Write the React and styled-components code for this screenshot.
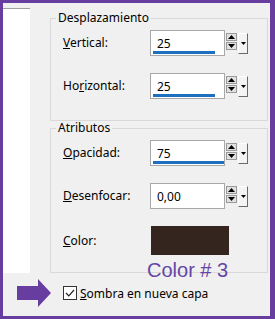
import React from "react";
import styled, { createGlobalStyle } from "styled-components";

const Global = createGlobalStyle`
  body {
    margin: 0;
    font-family: "Noto Sans", "Open Sans", sans-serif;
    font-size: 12px;
    color: #000;
  }
`;

const Frame = styled.div`
  position: relative;
  width: 275px;
  height: 319px;
  box-sizing: border-box;
  border: 3px solid #673ea0;
  border-right-width: 5px;
  background: #f0f0f0;
  display: flex;
  flex-direction: column;
`;

const Top = styled.div`
  display: flex;
  height: 270px;
`;

const Strip = styled.div`
  width: 27px;
  display: flex;
  flex-direction: column;
  .cap {
    height: 5px;
    background: #f0f0f0;
  }
  .body {
    flex: 1;
    background: #fff;
    border-top: 1px solid #a0a0a0;
  }
`;

const Panel = styled.div`
  flex: 1;
  padding: 8px 2px 0 20px;
  display: flex;
  flex-direction: column;
`;

const Group = styled.fieldset`
  margin: 0;
  padding: 5px 0 ${(p) => p.$bottom}px 12px;
  border: 1px solid #d9d9d9;
  border-radius: 0;
  min-width: 0;
  display: flex;
  flex-direction: column;
  gap: 17px;
  legend {
    margin-left: -7px;
    padding: 0 2px;
    line-height: 14px;
    height: 14px;
  }
`;

const Row = styled.div`
  display: flex;
  align-items: center;
  height: ${(p) => p.$h || 26}px;
`;

const Label = styled.div`
  width: 87px;
  line-height: 14px;
`;

const Field = styled.div`
  position: relative;
  box-sizing: border-box;
  width: 75px;
  height: 26px;
  background: #fff;
  border: 1px solid #a8a8a8;
  padding: 0 6px;
  display: flex;
  align-items: center;
`;

const Bar = styled.div`
  position: absolute;
  left: 2px;
  bottom: 1px;
  height: 3px;
  background: #1d6fc0;
`;

const SpinStack = styled.div`
  align-self: flex-start;
  margin: 3px 0 0 1px;
  display: flex;
  flex-direction: column;
  gap: 1px;
`;

const SpinBtn = styled.div`
  width: 11px;
  height: 8px;
  background: #e1e1e1;
  border: 1px solid #9a9a9a;
  box-sizing: border-box;
  display: flex;
  align-items: center;
  justify-content: center;
`;

const Drop = styled.div`
  align-self: flex-start;
  margin: 3px 0 0 1px;
  width: 10px;
  height: 21px;
  box-sizing: border-box;
  background: #f4f4f4;
  border: 1px solid #fff;
  border-right-color: #696969;
  border-bottom-color: #696969;
  display: flex;
  align-items: center;
  justify-content: center;
`;

const Swatch = styled.div`
  width: 78px;
  height: 29px;
  margin-left: 1px;
  background: #34261f;
`;

const Bottom = styled.div`
  flex: 1;
  display: flex;
  align-items: center;
  padding: 0 0 3px 14px;
`;

const Check = styled.div`
  width: 14px;
  height: 14px;
  box-sizing: border-box;
  border: 1px solid #333;
  background: #fff;
  margin-left: 12px;
  margin-right: 3px;
  display: flex;
  align-items: center;
  justify-content: center;
`;

const Note = styled.div`
  position: absolute;
  left: 144px;
  top: 257px;
  font-family: "Liberation Sans", Arial, sans-serif;
  font-size: 20px;
  line-height: 20px;
  color: #6446a6;
`;

function Tri({ up }) {
  return (
    <svg width="7" height="4" viewBox="0 0 7 4">
      <polygon points={up ? "3.5,0 7,4 0,4" : "0,0 7,0 3.5,4"} fill="#000" />
    </svg>
  );
}

function Spinner({ value, bar }) {
  return (
    <>
      <Field>
        {value}
        {bar ? <Bar style={{ width: bar }} /> : null}
      </Field>
      <SpinStack>
        <SpinBtn>
          <Tri up />
        </SpinBtn>
        <SpinBtn>
          <Tri />
        </SpinBtn>
      </SpinStack>
      <Drop>
        <svg width="5" height="3" viewBox="0 0 5 3">
          <polygon points="0,0 5,0 2.5,3" fill="#000" />
        </svg>
      </Drop>
    </>
  );
}

export default function App() {
  return (
    <>
      <Global />
      <Frame>
        <Top>
          <Strip>
            <div className="cap" />
            <div className="body" />
          </Strip>
          <Panel>
            <Group $bottom={21}>
              <legend>Desplazamiento</legend>
              <Row>
                <Label>
                  <u>V</u>ertical:
                </Label>
                <Spinner value="25" bar={62} />
              </Row>
              <Row>
                <Label>
                  Ho<u>r</u>izontal:
                </Label>
                <Spinner value="25" bar={62} />
              </Row>
            </Group>
            <Group $bottom={17}>
              <legend>Atributos</legend>
              <Row>
                <Label>
                  <u>O</u>pacidad:
                </Label>
                <Spinner value="75" bar={71} />
              </Row>
              <Row>
                <Label>
                  <u>D</u>esenfocar:
                </Label>
                <Spinner value="0,00" />
              </Row>
              <Row $h={29}>
                <Label>
                  <u>C</u>olor:
                </Label>
                <Swatch />
              </Row>
            </Group>
          </Panel>
        </Top>
        <Bottom>
          <svg width="34" height="28" viewBox="0 0 34 28">
            <polygon points="0,7 21,7 21,0 34,14 21,28 21,21 0,21" fill="#673ea0" />
          </svg>
          <Check>
            <svg width="10" height="8" viewBox="0 0 10 8">
              <polyline points="1,4 3.8,6.8 9,1" fill="none" stroke="#222" strokeWidth="1.2" />
            </svg>
          </Check>
          <span>
            <u>S</u>ombra en nueva capa
          </span>
        </Bottom>
        <Note>Color # 3</Note>
      </Frame>
    </>
  );
}
